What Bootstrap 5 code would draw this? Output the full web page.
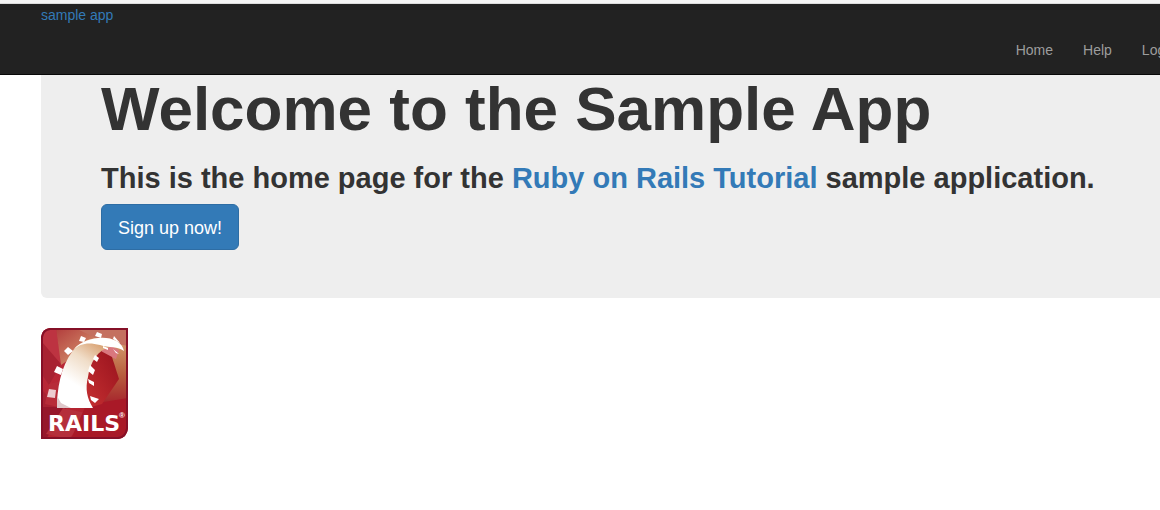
<!DOCTYPE html>
<html lang="en">
<head>
<meta charset="utf-8">
<meta name="viewport" content="width=device-width, initial-scale=1">
<title>Sample App</title>
<link href="https://cdn.jsdelivr.net/npm/bootstrap@5.3.0/dist/css/bootstrap.min.css" rel="stylesheet">
<style>
body { font-family: "Liberation Sans", Arial, sans-serif; font-size: 14px; line-height: 20px; color: #333; background: #fff; overflow-x: hidden; }
a { color: #337ab7; }
.top-strip { height: 4px; background: #f6f6f6; border-bottom: 1px solid #dcdcdc; }
.site-header { background: #222; border-bottom: 1px solid #080808; padding-top: 1px; }
.page-wrap { padding-left: 41px; margin-right: -35px; }
.site-header .nav-link { color: #9d9d9d; padding: 15px 15px 14px; line-height: 20px; }
.site-header .nav-link:hover { color: #fff; }
.hero { background: #eee; border-radius: 0 0 6px 6px; padding: 0 60px 48px; }
.hero h1 { font-size: 62px; line-height: 68px; font-weight: 700; margin-bottom: 18px; }
.hero h2 { font-size: 29px; line-height: 35px; font-weight: 700; margin-bottom: 8px; }
.btn-signup { --bs-btn-color: #fff; --bs-btn-bg: #337ab7; --bs-btn-border-color: #2e6da4; --bs-btn-hover-color: #fff; --bs-btn-hover-bg: #286090; --bs-btn-hover-border-color: #204d74; font-size: 18px; line-height: 24px; padding: 11px 16px 9px; border-radius: 6px; }
.logo-link { margin-top: 30px; }
.logo-word { font: 700 22px "DejaVu Sans", sans-serif; fill: #fff; }
.logo-mark { font: 700 8px "Liberation Sans", sans-serif; fill: #fff; }
</style>
<script src="https://cdn.jsdelivr.net/npm/bootstrap@5.3.0/dist/js/bootstrap.bundle.min.js" defer></script>
</head>
<body>
<div class="top-strip"></div>
<header class="site-header">
  <div class="page-wrap">
    <a class="d-block text-decoration-none" href="#" id="logo">sample app</a>
    <nav aria-label="Main">
      <ul class="nav justify-content-end flex-nowrap">
        <li class="nav-item"><a class="nav-link" href="#">Home</a></li>
        <li class="nav-item"><a class="nav-link" href="#">Help</a></li>
        <li class="nav-item"><a class="nav-link text-nowrap" href="#">Log in</a></li>
      </ul>
    </nav>
  </div>
</header>
<main class="page-wrap">
  <section class="hero">
    <h1>Welcome to the Sample App</h1>
    <h2>This is the home page for the <a class="text-decoration-none" href="#">Ruby on Rails Tutorial</a> sample application.</h2>
    <button type="button" class="btn btn-signup d-block">Sign up now!</button>
  </section>
  <a class="logo-link d-inline-block" href="#" aria-label="Rails">
    <svg class="d-block" width="87" height="111" viewBox="0 0 87 111">
      <defs>
        <linearGradient id="base" x1="0" y1="0" x2="1" y2="1"><stop offset="0" stop-color="#bb2b3c"/><stop offset=".55" stop-color="#b52431"/><stop offset="1" stop-color="#a41b29"/></linearGradient>
        <linearGradient id="tan" x1="0" y1="0" x2="1" y2="1"><stop offset="0" stop-color="#b23c3c"/><stop offset=".6" stop-color="#cd7f62"/><stop offset="1" stop-color="#b44036"/></linearGradient>
        <linearGradient id="side" x1="0" y1="0" x2="0" y2="1"><stop offset="0" stop-color="#d39a6c"/><stop offset=".5" stop-color="#b9603f"/><stop offset="1" stop-color="#a5212b"/></linearGradient>
        <linearGradient id="face" x1=".7" y1=".1" x2=".35" y2=".7"><stop offset="0" stop-color="#d9a273"/><stop offset=".45" stop-color="#f0ddc8"/><stop offset="1" stop-color="#fff"/></linearGradient>
        <linearGradient id="dark" x1="0" y1="1" x2="1" y2="0"><stop offset="0" stop-color="#c73132"/><stop offset="1" stop-color="#98121d"/></linearGradient>
        <clipPath id="plate"><path d="M9 0H87V100Q86 110 77 111H0V9Q1 1 9 0Z"/></clipPath>
      </defs>
      <g clip-path="url(#plate)">
        <path fill="url(#base)" d="M0 0H87V111H0Z"/>
        <path fill="#a82232" d="M0 9L20 36L8 57L0 45ZM0 61L17 78L0 96Z"/>
        <path fill="#bd3341" d="M0 0H15L20 36L1 14Z"/>
        <path fill="url(#tan)" d="M15 0H62L50 17L20 37Z"/>
        <path fill="#c4705f" d="M34 0H87V42L65 15Z"/>
        <path fill="url(#side)" d="M65 14L87 18V77L61 76Z"/>
        <path fill="#d9777e" d="M64 15L78 22L75 31L60 25Z"/>
        <path fill="#96172b" d="M0 79H26L5 111H0Z"/>
        <path fill="#b72c39" d="M8 56L20 53L17 79L4 76Z"/>
        <path fill="#b52f3b" d="M22 80L49 86L28 111L5 106Z"/>
        <path fill="#a91927" d="M45 77L87 70V111H30Z"/>
        <path fill="url(#dark)" d="M58 22L71 29L78 51L61 76L50 79L43 53L48 36Z"/>
        <path fill="url(#face)" d="M16 75C17 52 23 31 36 18C47 8 68 7 79 15L69 19C57 22 49 34 47 49C44 61 46 70 52 80H16Z"/>
        <path fill="#fff" d="M32 22C47 5 80 6 83 23C77 18 68 20 59 17C48 14 39 15 32 22Z"/>
        <path fill="#dfc8ca" d="M16 68L20 75L30 80H16Z"/>
        <g fill="#fff">
          <path fill="#edccd0" d="M8 61L15 62L14 70L6 69Z"/>
          <path d="M16 38L22 41L20 47L13 44ZM27 19L32 23L27 27L23 23ZM40 8L45 10L43 14L38 13ZM56 4L61 6L60 10L54 8ZM73 8L79 15L77 14L72 11Z"/>
          <path d="M62 18L67 20L67 22L62 20ZM72 21L78 26L75 25ZM54 27L58 30L56 34L52 31ZM49 37L54 42L52 47L47 43ZM47 51L53 54L53 58L48 55ZM49 68L58 71L54 75L50 72Z"/>
        </g>
      </g>
      <path fill="none" stroke="#851027" stroke-width="2" d="M9 1H86V100Q85 109 77 110H1V9Q2 2 9 1Z"/>
      <text class="logo-word" x="7" y="103">RAILS</text>
      <text class="logo-mark" x="78" y="90">®</text>
    </svg>
  </a>
</main>
</body>
</html>
